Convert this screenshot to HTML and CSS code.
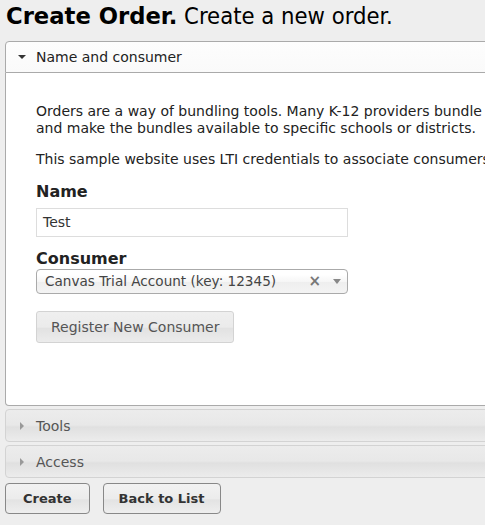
FILE: index.html
```html
<!DOCTYPE html>
<html>
<head>
<meta charset="utf-8">
<title>Create Order</title>
<link rel="stylesheet" href="styles.css">
</head>
<body>
<div class="page">
  <h1 class="title"><b>Create Order.</b> Create a new order.</h1>
  <div class="accordion">
    <div class="acc-header active">
      <span class="tri tri-down"></span>
      <span class="acc-label">Name and consumer</span>
    </div>
    <div class="acc-content">
      <p>Orders are a way of bundling tools. Many K-12 providers bundle tools together<br>and make the bundles available to specific schools or districts.</p>
      <p>This sample website uses LTI credentials to associate consumers with orders.</p>
      <div class="label label-name">Name</div>
      <div class="input">Test</div>
      <div class="label">Consumer</div>
      <div class="select">
        <span class="select-text">Canvas Trial Account (key: 12345)</span>
        <span class="select-clear">×</span>
        <span class="select-arrow"></span>
      </div>
      <div class="btn-soft">Register New Consumer</div>
    </div>
    <div class="acc-header collapsed">
      <span class="tri tri-right"></span>
      <span class="acc-label">Tools</span>
    </div>
    <div class="acc-header collapsed">
      <span class="tri tri-right"></span>
      <span class="acc-label">Access</span>
    </div>
  </div>
  <div class="actions">
    <div class="btn btn-create">Create</div>
    <div class="btn btn-back">Back to List</div>
  </div>
</div>
</body>
</html>
```

FILE: styles.css
```css
html, body {
  margin: 0;
  padding: 0;
  background: #eeeeee;
  overflow: hidden;
}
.page {
  width: 485px;
  height: 525px;
  overflow: hidden;
  font-family: "DejaVu Sans", Verdana, sans-serif;
  color: #222;
}
.title {
  margin: 0;
  padding: 2px 0 0 6px;
  height: 41px;
  box-sizing: border-box;
  font-family: "DejaVu Sans Condensed", "DejaVu Sans", sans-serif;
  font-weight: normal;
  font-size: 23.6px;
  line-height: 28px;
  color: #000;
  white-space: nowrap;
}
.title b {
  font-family: "DejaVu Sans", sans-serif;
  font-weight: bold;
  font-size: 22.7px;
}
.accordion {
  margin-left: 5px;
  width: 640px;
}
.acc-header {
  display: flex;
  align-items: center;
  box-sizing: border-box;
  height: 33px;
  border: 1px solid #d3d3d3;
  border-radius: 4px;
  font-size: 14px;
  color: #555;
  background: linear-gradient(to bottom, #ececec 0%, #e8e8e8 48%, #e0e0e0 55%, #ececec 100%);
  margin-top: 3px;
}
.acc-header.active {
  height: 32px;
  margin-top: 0;
  border-color: #aaa;
  border-radius: 4px 4px 0 0;
  background: linear-gradient(to bottom, #fdfdfd, #fafafa);
  color: #222;
}
.tri {
  width: 0;
  height: 0;
}
.tri-down {
  border-left: 4px solid transparent;
  border-right: 4px solid transparent;
  border-top: 4px solid #333;
  margin-left: 12px;
  margin-right: 10px;
}
.tri-right {
  border-top: 4px solid transparent;
  border-bottom: 4px solid transparent;
  border-left: 4px solid #999;
  margin-left: 14px;
  margin-right: 12px;
}
.acc-content {
  box-sizing: border-box;
  height: 333px;
  border: 1px solid #aaa;
  border-top: 0;
  border-radius: 0 0 4px 4px;
  background: #fff;
  padding: 30px 30px 0 30px;
  font-size: 14px;
  line-height: 17px;
  color: #222;
}
.acc-content p {
  margin: 0 0 14px 0;
  white-space: nowrap;
}
.label {
  font-weight: bold;
  font-size: 16px;
  line-height: 20px;
  color: #222;
}
.label-name {
  margin-top: 13px;
  margin-bottom: 6px;
}
.input {
  box-sizing: border-box;
  width: 312px;
  height: 29px;
  border: 1px solid #ddd;
  background: #fff;
  padding: 0 6px;
  font-size: 14px;
  line-height: 27px;
  color: #333;
  margin-bottom: 12px;
}
.select {
  box-sizing: border-box;
  width: 312px;
  height: 25px;
  border: 1px solid #aaa;
  border-radius: 4px;
  background: linear-gradient(to bottom, #ffffff 20%, #f6f6f6 50%, #eeeeee 52%, #f4f4f4 100%);
  display: flex;
  align-items: center;
  padding-left: 8px;
  font-size: 13.6px;
  color: #444;
}
.select-text {
  flex: 1;
}
.select-clear {
  font-size: 15px;
  font-weight: bold;
  color: #777;
  margin-right: 12px;
}
.select-arrow {
  width: 0;
  height: 0;
  border-left: 4px solid transparent;
  border-right: 4px solid transparent;
  border-top: 5px solid #888;
  margin-right: 6px;
}
.btn-soft {
  display: inline-block;
  box-sizing: border-box;
  margin-top: 17px;
  height: 32px;
  padding: 0 14px 0 14px;
  border: 1px solid #d3d3d3;
  border-radius: 3px;
  background: linear-gradient(to bottom, #efefef 0%, #ebebeb 50%, #e2e2e2 55%, #ececec 100%);
  font-size: 14px;
  line-height: 30px;
  color: #555;
}
.actions {
  display: flex;
  gap: 13px;
  margin: 5px 0 0 5px;
}
.btn {
  box-sizing: border-box;
  height: 31px;
  border: 1px solid #888;
  border-radius: 4px;
  background: linear-gradient(to bottom, #f2f2f2 0%, #ececec 50%, #e3e3e3 55%, #eeeeee 100%);
  font-size: 13px;
  font-weight: bold;
  line-height: 29px;
  color: #333;
}
.btn-create {
  padding: 0 17px;
}
.btn-back {
  padding: 0 15px;
}
```
